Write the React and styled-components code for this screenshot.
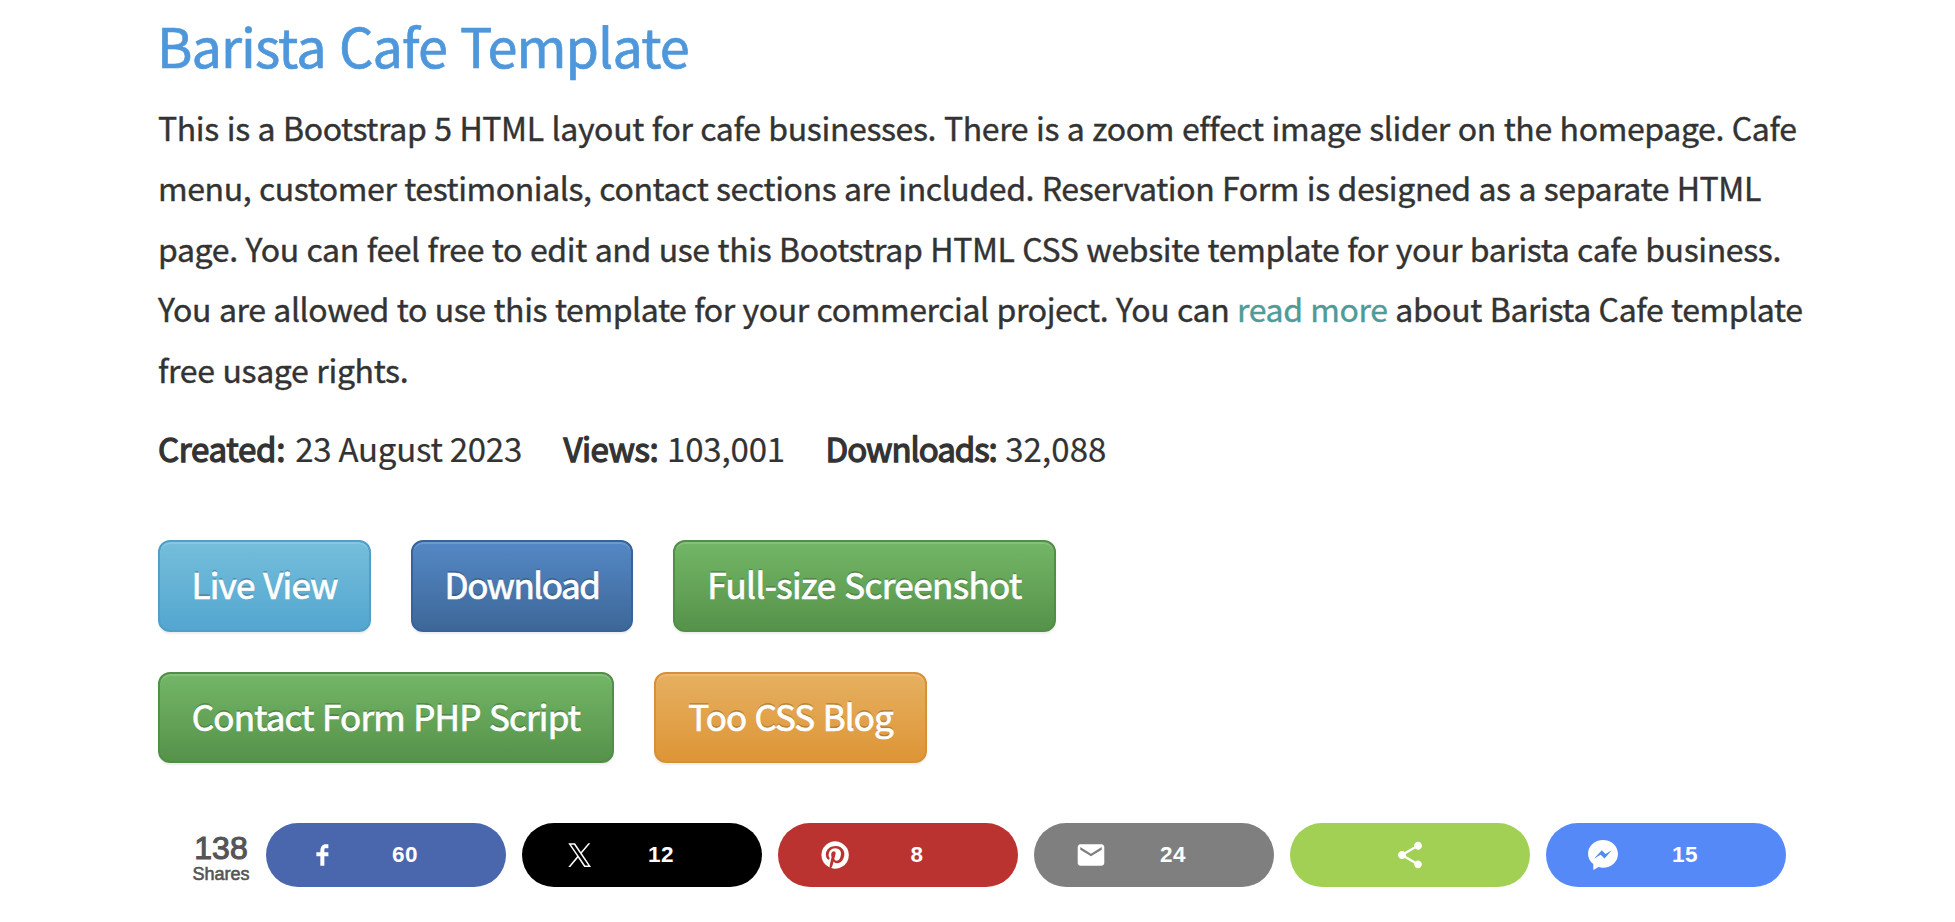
import React from "react";
import styled, { createGlobalStyle } from "styled-components";

const GlobalStyle = createGlobalStyle`
  body {
    margin: 0;
    background: #fff;
    color: #333;
    font-family: "Noto Sans CJK JP", "Noto Sans", sans-serif;
  }
`;

const Page = styled.main`
  box-sizing: border-box;
  height: 922px;
  padding: 15px 130px 0 158px;
  overflow: hidden;
`;

const Title = styled.h1`
  margin: 0 0 22px -1px;
  color: #4f97db;
  font-size: 54px;
  font-weight: 400;
  line-height: 60px;
  letter-spacing: -0.93px;
  word-spacing: 2px;
  -webkit-text-stroke: 0.7px currentColor;
`;

const Description = styled.p`
  margin: 0 0 19px;
  font-size: 32px;
  line-height: 60.4px;
  white-space: nowrap;
  word-spacing: 1px;
  -webkit-text-stroke: 0.4px currentColor;
`;

const Line = styled.span`
  display: block;
  letter-spacing: ${(p) => p.$spacing}px;
`;

const ReadMore = styled.a`
  color: #4f9b98;
  letter-spacing: -0.4px;
  text-decoration: none;
`;

const Stats = styled.div`
  display: flex;
  height: 60px;
  font-size: 33px;
  line-height: 60px;
  white-space: nowrap;
`;

const Stat = styled.div`
  display: flex;
  justify-content: space-between;
  box-sizing: border-box;
  width: ${(p) => p.$width}px;
  margin-right: ${(p) => p.$after || 0}px;
`;

const StatLabel = styled.span`
  letter-spacing: ${(p) => p.$spacing}px;
  -webkit-text-stroke: 1.3px currentColor;
`;

const StatValue = styled.span`
  letter-spacing: ${(p) => p.$spacing}px;
  -webkit-text-stroke: 0.2px currentColor;
`;

const Buttons = styled.div`
  display: flex;
  flex-direction: column;
  gap: 40px;
  margin-top: 62px;
`;

const ButtonRow = styled.div`
  display: flex;
  gap: 40px;
`;

const tones = {
  info: ["#75bedb", "#53a6d0", "#4f9fc7"],
  primary: ["#5488c5", "#3d6799", "#38639a"],
  success: ["#73b667", "#56924a", "#518e47"],
  warning: ["#e6b060", "#de9536", "#d69138"],
};

const Button = styled.a`
  display: flex;
  align-items: center;
  justify-content: center;
  box-sizing: border-box;
  width: ${(p) => p.$width}px;
  height: ${(p) => p.$height}px;
  padding-bottom: 4px;
  border: 2px solid ${(p) => tones[p.$tone][2]};
  border-radius: 12px;
  background: linear-gradient(${(p) => tones[p.$tone][0]}, ${(p) => tones[p.$tone][1]});
  box-shadow: inset 0 2px 0 rgba(255, 255, 255, 0.15), 0 2px 2px rgba(0, 0, 0, 0.07);
  color: #fff;
  font-size: 35px;
  line-height: 52px;
  letter-spacing: ${(p) => p.$spacing}px;
  word-spacing: 1.5px;
  text-shadow: 0 -2px 0 rgba(0, 0, 0, 0.2);
  white-space: nowrap;
  -webkit-text-stroke: 0.7px #fff;
`;

const ShareBar = styled.div`
  display: flex;
  gap: 16px;
  margin-top: 60px;
  font-family: "Liberation Sans", Arial, sans-serif;
`;

const Total = styled.div`
  box-sizing: border-box;
  width: 92px;
  padding: 8px 0 0 34px;
  color: #555;
  text-align: center;
  white-space: nowrap;
`;

const TotalCount = styled.div`
  font-size: 32px;
  line-height: 34px;
  -webkit-text-stroke: 1.1px currentColor;
`;

const TotalLabel = styled.div`
  font-size: 18px;
  line-height: 18px;
  -webkit-text-stroke: 0.6px currentColor;
`;

const Pill = styled.a`
  display: flex;
  align-items: center;
  justify-content: ${(p) => (p.$center ? "center" : "flex-start")};
  box-sizing: border-box;
  width: 240px;
  height: 64px;
  padding-left: ${(p) => (p.$center ? 0 : 41)}px;
  border-radius: 32px;
  background: ${(p) => p.$color};
  color: #fff;
`;

const Icon = styled.svg`
  width: 32px;
  height: 32px;
  fill: currentColor;
`;

const Count = styled.span`
  width: 132px;
  font-size: 22.5px;
  font-weight: 700;
  letter-spacing: 0.6px;
  text-align: center;
`;

const icons = {
  facebook: (
    <path d="m21.7 16.7h5v5h-5v11.6h-5v-11.6h-5v-5h5v-2.1c0-2 0.6-4.5 1.8-5.9 1.3-1.3 2.8-2 4.7-2h3.5v5h-3.5c-0.9 0-1.5 0.6-1.5 1.5v3.5z" />
  ),
  x: (
    <path
      transform="translate(6.6 5.2) scale(0.0237 0.0242)"
      d="M714.163 519.284L1160.89 0H1055.03L667.137 450.887L357.328 0H0L468.492 681.821L0 1226.37H105.866L515.491 750.218L842.672 1226.37H1200L714.137 519.284H714.163ZM569.165 687.828L521.697 619.934L144.011 79.6944H306.615L611.412 515.685L658.88 583.579L1055.08 1150.3H892.476L569.165 687.854V687.828Z"
    />
  ),
  pinterest: (
    <path d="m37.3 20q0 4.7-2.3 8.6t-6.3 6.2-8.6 2.3q-2.4 0-4.8-0.7 1.3-2 1.7-3.6 0.2-0.8 1.2-4.7 0.5 0.8 1.7 1.5t2.5 0.6q2.7 0 4.8-1.5t3.3-4.2 1.2-6.1q0-2.5-1.4-4.7t-3.8-3.7-5.7-1.4q-2.4 0-4.4 0.7t-3.4 1.7-2.5 2.4-1.5 2.9-0.4 3q0 2.4 0.8 4.1t2.7 2.5q0.6 0.3 0.8-0.5 0.1-0.1 0.2-0.6t0.2-0.7q0.1-0.5-0.3-1-1.1-1.3-1.1-3.3 0-3.4 2.3-5.8t6.1-2.5q3.4 0 5.3 1.9t1.9 4.7q0 3.8-1.6 6.5t-3.9 2.6q-1.3 0-2.2-0.9t-0.5-2.4q0.2-0.8 0.6-2.1t0.7-2.3 0.2-1.6q0-1.2-0.6-1.9t-1.7-0.7q-1.4 0-2.3 1.2t-1 3.2q0 1.6 0.6 2.7l-2.2 9.4q-0.4 1.5-0.3 3.9-4.6-2-7.5-6.3t-2.8-9.4q0-4.7 2.3-8.6t6.2-6.2 8.6-2.3 8.6 2.3 6.3 6.2 2.3 8.6z" />
  ),
  mail: (
    <path d="m33.4 13.4v-3.4l-13.4 8.4-13.4-8.4v3.4l13.4 8.2z m0-6.8q1.3 0 2.3 1.1t0.9 2.3v20q0 1.3-0.9 2.3t-2.3 1.1h-26.8q-1.3 0-2.3-1.1t-0.9-2.3v-20q0-1.3 0.9-2.3t2.3-1.1h26.8z" />
  ),
  share: (
    <path d="m30 26.8c2.7 0 4.8 2.2 4.8 4.8s-2.1 5-4.8 5-4.8-2.3-4.8-5c0-0.3 0-0.7 0-1.1l-11.8-6.8c-0.9 0.8-2.1 1.3-3.4 1.3-2.7 0-5-2.3-5-5s2.3-5 5-5c1.3 0 2.5 0.5 3.4 1.3l11.8-6.8c-0.1-0.4-0.2-0.8-0.2-1.1 0-2.8 2.3-5 5-5s5 2.2 5 5-2.3 5-5 5c-1.3 0-2.5-0.6-3.4-1.4l-11.8 6.8c0.1 0.4 0.2 0.8 0.2 1.2s-0.1 0.8-0.2 1.2l11.9 6.8c0.9-0.7 2.1-1.2 3.3-1.2z" />
  ),
  messenger: (
    <path
      fillRule="evenodd"
      d="M20 1.3C9.700 1.300 1.300 8.700 1.300 18.300C1.300 23.500 3.700 28.200 7.900 31.300V38.700L14.500 35.100C16.200 35.600 18.100 35.900 20 35.900C30.300 35.900 38.700 28.200 38.700 18.600C38.700 9 30.300 1.300 20 1.300ZM8.600 24.600L18.500 14L23.200 18.800L31 14L21.900 24.500L17 19.800Z"
    />
  ),
};

const shares = [
  { icon: "facebook", color: "#4a66ad", count: "60" },
  { icon: "x", color: "#000", count: "12" },
  { icon: "pinterest", color: "#ba3330", count: "8" },
  { icon: "mail", color: "#7f7f7f", count: "24" },
  { icon: "share", color: "#a2d055" },
  { icon: "messenger", color: "#5589f8", count: "15" },
];

export default function App() {
  return (
    <>
      <GlobalStyle />
      <Page>
        <Title>Barista Cafe Template</Title>
        <Description>
          <Line $spacing={-0.365}>
            This is a Bootstrap 5 HTML layout for cafe businesses. There is a zoom effect image slider on the homepage. Cafe
          </Line>
          <Line $spacing={-0.41}>
            menu, customer testimonials, contact sections are included. Reservation Form is designed as a separate HTML
          </Line>
          <Line $spacing={-0.37}>
            page. You can feel free to edit and use this Bootstrap HTML CSS website template for your barista cafe business.
          </Line>
          <Line $spacing={-0.4}>
            You are allowed to use this template for your commercial project. You can <ReadMore>read more</ReadMore> about
            Barista Cafe template
          </Line>
          <Line $spacing={-0.33}>free usage rights.</Line>
        </Description>
        <Stats>
          <Stat $width={364} $after={41.5}>
            <StatLabel $spacing={-0.25}>Created:</StatLabel>
            <StatValue $spacing={-0.25}>23 August 2023</StatValue>
          </Stat>
          <Stat $width={221.5} $after={40.5}>
            <StatLabel $spacing={-0.5}>Views:</StatLabel>
            <StatValue $spacing={-0.15}>103,001</StatValue>
          </Stat>
          <Stat $width={281}>
            <StatLabel $spacing={-1.05}>Downloads:</StatLabel>
            <StatValue $spacing={0.1}>32,088</StatValue>
          </Stat>
        </Stats>
        <Buttons>
          <ButtonRow>
            <Button $tone="info" $width={213} $height={92} $spacing={-0.75}>Live View</Button>
            <Button $tone="primary" $width={222} $height={92} $spacing={-1.45}>Download</Button>
            <Button $tone="success" $width={383} $height={92} $spacing={-0.6}>Full-size Screenshot</Button>
          </ButtonRow>
          <ButtonRow>
            <Button $tone="success" $width={456} $height={91} $spacing={-0.83}>Contact Form PHP Script</Button>
            <Button $tone="warning" $width={273} $height={91} $spacing={-0.95}>Too CSS Blog</Button>
          </ButtonRow>
        </Buttons>
        <ShareBar>
          <Total>
            <TotalCount>138</TotalCount>
            <TotalLabel>Shares</TotalLabel>
          </Total>
          {shares.map((s) => (
            <Pill key={s.icon} $color={s.color} $center={!s.count}>
              <Icon viewBox="0 0 40 40">{icons[s.icon]}</Icon>
              {s.count && <Count>{s.count}</Count>}
            </Pill>
          ))}
        </ShareBar>
      </Page>
    </>
  );
}
